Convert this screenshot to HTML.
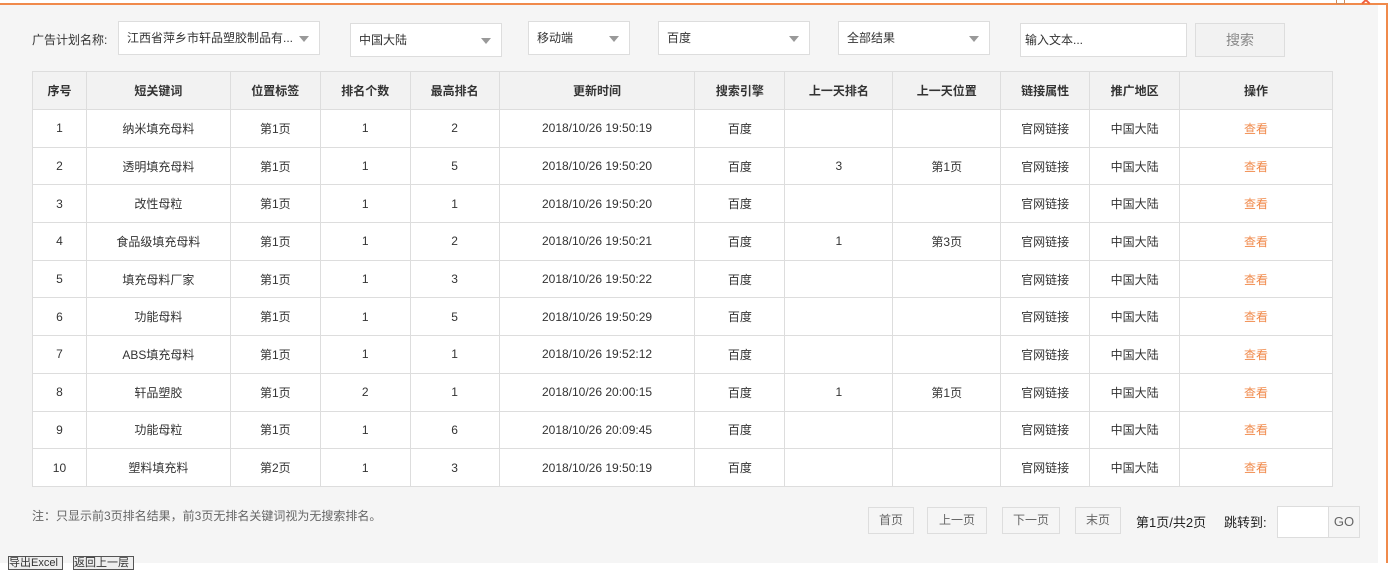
<!DOCTYPE html>
<html><head><meta charset="utf-8"><style>
*{box-sizing:border-box;margin:0;padding:0}
body{width:1389px;height:563px;overflow:hidden;background:#fff;font-family:"Liberation Sans","Noto Sans CJK SC",sans-serif;font-size:12px;color:#333;position:relative}
.bg{position:absolute;left:0;top:4px;width:1378px;height:559px;background:#f5f5f5}
.tl{position:absolute;left:0;top:3px;width:1388px;height:2px;background:#f08a4b}
.rl{position:absolute;left:1386px;top:3px;width:2px;height:560px;background:#f08a4b}
.a{position:absolute}
.sel{position:absolute;background:#fff;border:1px solid #ddd;height:34px;line-height:32px;padding-left:8px;font-size:12px;color:#333}
.sel:after{content:"";position:absolute;right:10px;top:14px;border:5px solid transparent;border-top:6px solid #999;border-bottom:0}
.sel.n:after{display:none}
table{position:absolute;left:32px;top:71px;border-collapse:collapse;background:#fff;width:1301px}
td,th{border:1px solid #ddd;text-align:center;height:37.7px;font-size:12px;color:#333;font-weight:normal;padding:0}
th{background:#f2f2f2;font-weight:bold;height:38px}
td.o{color:#f08a4b}
.pb{position:absolute;top:507px;height:27px;line-height:25px;border:1px solid #ddd;text-align:center;color:#666;font-size:12px;background:#f5f5f5}
</style></head><body>
<div class="bg"></div><div class="tl"></div><div class="rl"></div>
<div class="a" style="left:1336px;top:-4px;width:9px;height:8px;border:1px solid #d08a5a"></div>
<div class="a" style="left:1360px;top:-8px;color:#f06040;font-size:14px;font-weight:bold">✕</div>
<div class="a" style="left:32px;top:32px;line-height:16px">广告计划名称:</div>
<div class="sel" style="left:118px;top:21px;width:202px">江西省萍乡市轩品塑胶制品有...</div>
<div class="sel" style="left:350px;top:23px;width:152px">中国大陆</div>
<div class="sel" style="left:528px;top:21px;width:102px">移动端</div>
<div class="sel" style="left:658px;top:21px;width:152px">百度</div>
<div class="sel" style="left:838px;top:21px;width:152px">全部结果</div>
<div class="sel n" style="left:1020px;top:23px;width:167px;padding-left:4px">输入文本...</div>
<div class="a" style="left:1195px;top:23px;width:90px;height:34px;border:1px solid #ddd;background:#f2f2f2;line-height:32px;text-align:center;font-size:14px;color:#888">搜索</div>
<table>
<colgroup><col style="width:54px"><col style="width:144px"><col style="width:90px"><col style="width:90px"><col style="width:89px"><col style="width:196px"><col style="width:90px"><col style="width:108px"><col style="width:108px"><col style="width:89px"><col style="width:90px"><col style="width:153px"></colgroup>
<tr><th>序号</th><th>短关键词</th><th>位置标签</th><th>排名个数</th><th>最高排名</th><th>更新时间</th><th>搜索引擎</th><th>上一天排名</th><th>上一天位置</th><th>链接属性</th><th>推广地区</th><th>操作</th></tr>
<tr><td>1</td><td>纳米填充母料</td><td>第1页</td><td>1</td><td>2</td><td>2018/10/26 19:50:19</td><td>百度</td><td></td><td></td><td>官网链接</td><td>中国大陆</td><td class="o">查看</td></tr>
<tr><td>2</td><td>透明填充母料</td><td>第1页</td><td>1</td><td>5</td><td>2018/10/26 19:50:20</td><td>百度</td><td>3</td><td>第1页</td><td>官网链接</td><td>中国大陆</td><td class="o">查看</td></tr>
<tr><td>3</td><td>改性母粒</td><td>第1页</td><td>1</td><td>1</td><td>2018/10/26 19:50:20</td><td>百度</td><td></td><td></td><td>官网链接</td><td>中国大陆</td><td class="o">查看</td></tr>
<tr><td>4</td><td>食品级填充母料</td><td>第1页</td><td>1</td><td>2</td><td>2018/10/26 19:50:21</td><td>百度</td><td>1</td><td>第3页</td><td>官网链接</td><td>中国大陆</td><td class="o">查看</td></tr>
<tr><td>5</td><td>填充母料厂家</td><td>第1页</td><td>1</td><td>3</td><td>2018/10/26 19:50:22</td><td>百度</td><td></td><td></td><td>官网链接</td><td>中国大陆</td><td class="o">查看</td></tr>
<tr><td>6</td><td>功能母料</td><td>第1页</td><td>1</td><td>5</td><td>2018/10/26 19:50:29</td><td>百度</td><td></td><td></td><td>官网链接</td><td>中国大陆</td><td class="o">查看</td></tr>
<tr><td>7</td><td>ABS填充母料</td><td>第1页</td><td>1</td><td>1</td><td>2018/10/26 19:52:12</td><td>百度</td><td></td><td></td><td>官网链接</td><td>中国大陆</td><td class="o">查看</td></tr>
<tr><td>8</td><td>轩品塑胶</td><td>第1页</td><td>2</td><td>1</td><td>2018/10/26 20:00:15</td><td>百度</td><td>1</td><td>第1页</td><td>官网链接</td><td>中国大陆</td><td class="o">查看</td></tr>
<tr><td>9</td><td>功能母粒</td><td>第1页</td><td>1</td><td>6</td><td>2018/10/26 20:09:45</td><td>百度</td><td></td><td></td><td>官网链接</td><td>中国大陆</td><td class="o">查看</td></tr>
<tr><td>10</td><td>塑料填充料</td><td>第2页</td><td>1</td><td>3</td><td>2018/10/26 19:50:19</td><td>百度</td><td></td><td></td><td>官网链接</td><td>中国大陆</td><td class="o">查看</td></tr>
</table>
<div class="a" style="left:32px;top:507px;color:#666">注：只显示前3页排名结果，前3页无排名关键词视为无搜索排名。</div>
<div class="pb" style="left:868px;width:46px">首页</div>
<div class="pb" style="left:927px;width:60px">上一页</div>
<div class="pb" style="left:1002px;width:58px">下一页</div>
<div class="pb" style="left:1075px;width:46px">末页</div>
<div class="a" style="left:1136px;top:512px;font-size:13px;color:#222">第1页/共2页</div>
<div class="a" style="left:1224px;top:512px;font-size:13px;color:#222">跳转到:</div>
<div class="a" style="left:1277px;top:506px;width:83px;height:32px;border:1px solid #ddd;background:#fff"></div>
<div class="a" style="left:1328px;top:507px;width:31px;height:30px;border-left:1px solid #ddd;background:#f5f5f5;line-height:30px;text-align:center;color:#666;font-size:13px">GO</div>
<div class="a" style="left:8px;top:556px;width:55px;height:14px;border:1px solid #555;background:#eee;font-size:11px;line-height:12px">导出Excel</div>
<div class="a" style="left:73px;top:556px;width:61px;height:14px;border:1px solid #555;background:#eee;font-size:11px;line-height:12px">返回上一层</div>
</body></html>
